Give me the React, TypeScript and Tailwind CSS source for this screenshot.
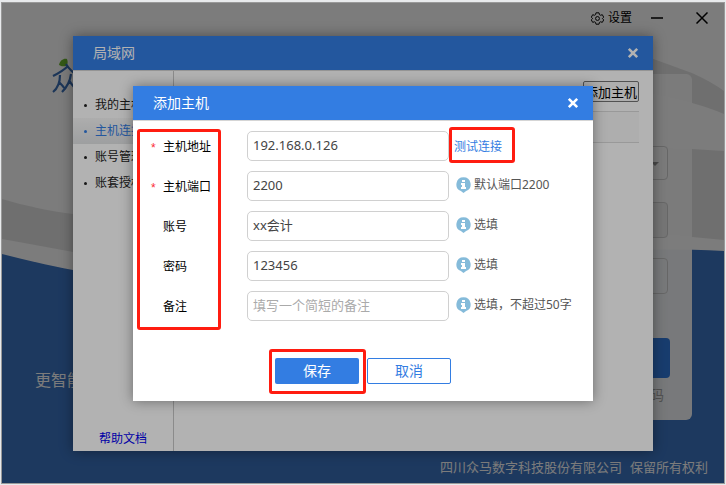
import type { ReactNode } from "react";

const navItems = ["我的主机", "主机连接", "账号管理", "账套授权"];

type Field = {
  id: string;
  label: string;
  required?: boolean;
  value?: string;
  placeholder?: string;
  hint?: string;
};

const fields: Field[] = [
  { id: "host", label: "主机地址", required: true, value: "192.168.0.126" },
  { id: "port", label: "主机端口", required: true, value: "2200", hint: "默认端口2200" },
  { id: "account", label: "账号", value: "xx会计", hint: "选填" },
  { id: "password", label: "密码", value: "123456", hint: "选填" },
  { id: "remark", label: "备注", placeholder: "填写一个简短的备注", hint: "选填，不超过50字" },
];

function CloseIcon() {
  return (
    <svg width="12" height="12" viewBox="0 0 12 12" aria-hidden="true">
      <path d="M1.800 1.800 L10.200 10.200 M10.200 1.800 L1.800 10.200" stroke="#fff" strokeWidth="2.600" fill="none" />
    </svg>
  );
}

function InfoIcon() {
  return (
    <svg width="15" height="16" viewBox="0 0 15 16" aria-hidden="true">
      <path d="M7.5 0.3a7.1 7.1 0 0 1 2.6 13.7L7.5 16l-2.6-2A7.1 7.1 0 0 1 7.5 0.3z" fill="#85bbda" />
      <path d="M6 3h3v2H6z M5 6h4v4h1v2H5v-2h1V8H5z" fill="#fff" />
    </svg>
  );
}

function GearIcon() {
  return (
    <svg width="13" height="13" viewBox="0 0 24 24" fill="none" stroke="#000" strokeWidth="1.800" strokeLinejoin="round" aria-hidden="true">
      <path d="M9.2 1.5h5.6l.8 3.4 2 1.1 3.3-1 2.6 4.7-2.5 2.3 2.5 2.5-2.6 4.6-3.3-1-2 1.1-.8 3.3H9.2l-.8-3.3-2-1.1-3.3 1L.5 14.500 3 12 .5 9.700 3.100 5l3.300 1 2-1.100z" />
      <circle cx="12" cy="12" r="3.6" />
    </svg>
  );
}

function Logo() {
  return (
    <svg width="48" height="40" viewBox="0 0 48 40" fill="none" aria-hidden="true">
      <path d="M8 7C9 2 13 0 16 1c1 3 1 5-1 7-2 0-4 1-7-1z" fill="#6bb52e" />
      <path d="M17 8C13 12 8 15 2 18M15 6c3 5 7 9 13 12M9 17c0 8-2 13-7 17M8 24c2 2 4 4 6 7M20 16c-1 8-4 13-9 18M18 22c3 6 6 9 12 12" stroke="#3c70b6" strokeWidth="2.200" />
    </svg>
  );
}

function Backdrop() {
  return (
    <svg className="absolute inset-0 h-full w-full" viewBox="0 0 722 480" preserveAspectRatio="none" aria-hidden="true">
      <rect width="722" height="480" fill="#fff" />
      <path d="M0 196C24 203 48 208 71 211C240 230 360 30 560 36C610 38 650 56 690 70Q710 79 722 88V111Q708 105 690 100C540 60 420 120 360 200S160 268 71 249C48 245 24 240 0 236z" fill="#e6e6e6" />
      <path d="M400 160C500 142 600 142 690 146L722 148V237L690 234C600 225 500 240 400 260z" fill="#e6e6e6" />
      <path d="M0 251C24 257 48 263 71 267C200 290 300 285 400 268S620 243 722 248V480H0z" fill="#3d76c4" />
    </svg>
  );
}

function DialogHeader({ title, label }: { title: string; label: string }) {
  return (
    <header className="flex h-[35px] shrink-0 items-center justify-between border-b border-[#d5d5d5] bg-[#337de2] pr-[14px] pl-5 text-white">
      <h2 className="text-sm">{title}</h2>
      <button type="button" aria-label={label} className="pb-px">
        <CloseIcon />
      </button>
    </header>
  );
}

function Overlay({ children }: { children: ReactNode }) {
  return <div className="absolute inset-0 flex items-center justify-center bg-black/30 pt-px">{children}</div>;
}

function Login() {
  return (
    <div className="relative flex h-full flex-col">
      <header className="flex h-[30px] shrink-0 items-center justify-end pr-4 text-xs">
        <button type="button" className="flex items-center gap-1">
          <GearIcon />
          设置
        </button>
        <button type="button" aria-label="最小化" className="ml-[19px]">
          <svg width="12" height="12" viewBox="0 0 12 12" aria-hidden="true">
            <path d="M0 6h12" stroke="#000" strokeWidth="1.500" />
          </svg>
        </button>
        <button type="button" aria-label="关闭窗口" className="ml-[33px]">
          <svg width="12" height="12" viewBox="0 0 12 12" aria-hidden="true">
            <path d="M0.500 0.500l11 11M11.500 0.500l-11 11" stroke="#000" strokeWidth="1.500" />
          </svg>
        </button>
      </header>
      <main className="flex grow items-start justify-between pt-[41px] pr-8 pl-[33px]">
        <section>
          <div className="-mt-4 ml-4">
            <Logo />
          </div>
          <p className="mt-[270px] text-base text-white">更智能</p>
        </section>
        <form className="flex h-[346px] w-60 flex-col items-end rounded-md bg-[#fffffff5] pt-[72px] pr-6">
          <div className="relative">
            <select aria-label="账套" className="block h-[34px] w-48 appearance-none rounded border border-[#d5d5d5] bg-transparent" />
            <span className="pointer-events-none absolute top-4 right-[9px] border-x-4 border-t-4 border-x-transparent border-t-[#999]" />
          </div>
          <input aria-label="用户名" className="mt-[22px] h-9 w-48 rounded border border-[#d5d5d5] bg-[#f2f2f2]" />
          <input aria-label="登录密码" type="password" className="mt-5 h-9 w-48 rounded border border-[#d5d5d5]" />
          <button type="button" aria-label="登录" className="-mr-[2px] mt-11 h-10 w-48 rounded bg-[#337de2]" />
          <a href="#forgot" className="mt-[7px] mr-1 text-sm text-[#aaa]">
            码
          </a>
        </form>
      </main>
      <footer className="flex h-8 shrink-0 justify-end gap-2 pr-4 text-[13px] leading-8 text-white">
        <span>四川众马数字科技股份有限公司</span>
        <span>保留所有权利</span>
      </footer>
    </div>
  );
}

function LanDialog() {
  return (
    <section role="dialog" aria-label="局域网" className="flex h-[415px] w-[580px] flex-col bg-white shadow-[0_0_12px_rgba(0,0,0,0.4)]">
      <DialogHeader title="局域网" label="关闭局域网" />
      <div className="flex grow">
        <nav className="flex w-[101px] shrink-0 flex-col justify-between border-r border-[#c8c8c8] pt-[21px] pb-1 text-xs">
          <ul>
            {navItems.map((item) => (
              <li
                key={item}
                className={
                  item === "主机连接"
                    ? "flex h-[26px] items-center bg-linear-to-b from-[#f8f8f8] to-[#e2e4e6] pl-[11px] text-[#337de2]"
                    : "flex h-[26px] items-center pl-[11px] text-[#222]"
                }
              >
                <span className="mr-2 h-[3px] w-[3px] rounded-full bg-current" />
                {item}
              </li>
            ))}
          </ul>
          <a href="#help" className="text-center text-[#0000ee]">
            帮助文档
          </a>
        </nav>
        <div className="flex grow flex-col items-end px-[14px] pt-[10px]">
          <button type="button" className="h-[21px] rounded-xs border border-[#767676] bg-[#fafafa] px-px text-[13px] leading-5">
            添加主机
          </button>
          <div className="mt-[9px] h-8 w-full border-y border-[#dcdcdc] bg-[#fafafa]" />
        </div>
      </div>
    </section>
  );
}

function AddHostDialog() {
  return (
    <section role="dialog" aria-label="添加主机" className="relative flex h-[315px] w-[460px] flex-col bg-white shadow-[0_0_12px_rgba(0,0,0,0.4)]">
      <DialogHeader title="添加主机" label="关闭添加主机" />
      <form className="pt-[5px]">
        {fields.map((field) => (
          <div key={field.id} className="flex h-10 items-center text-xs">
            <span className="w-[30px] pt-1 pl-[18px] font-['Liberation_Sans',sans-serif] text-red-500">{field.required ? "*" : ""}</span>
            <label htmlFor={field.id} className="w-[84px] pt-0.5 text-black">
              {field.label}
            </label>
            <input
              id={field.id}
              defaultValue={field.value}
              placeholder={field.placeholder}
              className="h-[30px] w-[202px] rounded-[5px] border border-[#d0d0d0] px-[5px] pb-[3px] text-[13px] text-[#444] placeholder:text-[#aaa]"
            />
            {field.hint ? (
              <span className="flex items-center gap-[3px] pb-0.5 pl-[7px] text-[#555]">
                <InfoIcon />
                {field.hint}
              </span>
            ) : (
              <a href="#test" className="pt-0.5 pl-[5px] text-[#337de2]">
                测试连接
              </a>
            )}
          </div>
        ))}
        <div className="mt-8 flex justify-center gap-2 text-sm">
          <button type="button" className="h-[26px] w-21 rounded-xs bg-[#337de2] text-white">
            保存
          </button>
          <button type="button" className="h-[26px] w-21 rounded-xs border border-[#337de2] text-[#337de2]">
            取消
          </button>
        </div>
      </form>
      <div className="pointer-events-none absolute top-[43px] left-1 h-[201px] w-[84px] rounded-[3px] border-3 border-[#ff1c10]" />
      <div className="pointer-events-none absolute top-[41px] left-[316px] h-9 w-[66px] rounded-[3px] border-3 border-[#ff1c10]" />
      <div className="pointer-events-none absolute top-[263px] left-[136px] h-[45px] w-[97px] rounded-[3px] border-3 border-[#ff1c10]" />
    </section>
  );
}

export default function App() {
  return (
    <div className="h-screen bg-[#e8eaec] pt-[2px] pr-px pb-px pl-px font-['Noto_Sans','Noto_Sans_CJK_SC',sans-serif]">
      <div className="relative h-full overflow-hidden border border-[#999]">
        <Backdrop />
        <Login />
        <Overlay>
          <LanDialog />
        </Overlay>
        <Overlay>
          <AddHostDialog />
        </Overlay>
      </div>
    </div>
  );
}
